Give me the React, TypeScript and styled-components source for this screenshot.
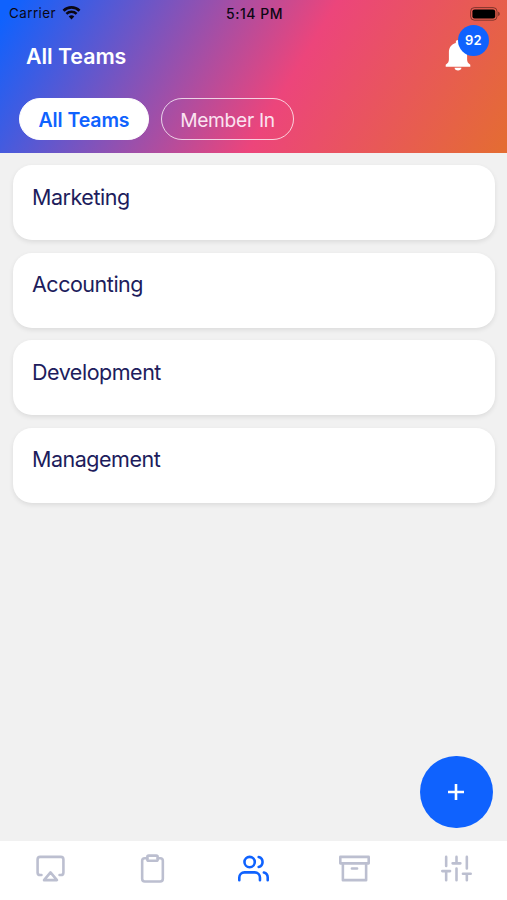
import React from "react";
import styled, { createGlobalStyle } from "styled-components";

const GlobalStyle = createGlobalStyle`
  * { box-sizing: border-box; }
  body { margin: 0; font-family: Inter, "Liberation Sans", sans-serif; }
`;

const Screen = styled.div`
  position: relative;
  display: flex;
  flex-direction: column;
  width: 100%;
  height: 100vh;
  background: #f1f1f1;
  overflow: hidden;
`;

const Header = styled.header`
  flex: none;
  height: 153px;
  background: linear-gradient(121deg, #0f62fe 2%, #ec457b 56.5%, #e46c33 99%);
`;

const StatusBar = styled.div`
  display: grid;
  grid-template-columns: 1fr auto 1fr;
  align-items: center;
  height: 27px;
  padding: 0 7px 0 9px;
  color: #0b0713;
  font-size: 13.4px;
  line-height: 27px;
`;

const Carrier = styled.div`
  display: flex;
  align-items: center;
  gap: 6px;
  letter-spacing: 0.45px;
`;

const WifiIcon = styled.svg`
  margin-bottom: 2px;
`;

const Clock = styled.div`
  font-weight: 500;
  font-size: 14px;
  letter-spacing: 0.5px;
`;

const BatteryIcon = styled.svg`
  justify-self: end;
`;

const TitleRow = styled.div`
  display: flex;
  align-items: center;
  justify-content: space-between;
  height: 58px;
  padding: 0 36px 0 26px;
`;

const Title = styled.h1`
  margin: 0;
  color: #fff;
  font-size: 21.4px;
  line-height: 26px;
  font-weight: 600;
  letter-spacing: -0.05px;
`;

const BellButton = styled.div`
  position: relative;
  width: 26px;
  height: 32px;
`;

const Badge = styled.span`
  position: absolute;
  left: 13px;
  top: -15px;
  width: 31px;
  height: 31px;
  border-radius: 50%;
  background: #0f62fe;
  color: #fff;
  font-size: 13px;
  font-weight: 600;
  line-height: 31px;
  text-align: center;
  letter-spacing: 0.4px;
`;

const Tabs = styled.div`
  display: flex;
  gap: 12px;
  padding: 13px 19px 0;
`;

const Tab = styled.button<{ $active?: boolean }>`
  width: ${(p) => (p.$active ? 130 : 133)}px;
  height: 42px;
  padding: 2px 0 0;
  border: 1px solid ${(p) => (p.$active ? "#fff" : "rgba(255,255,255,0.75)")};
  border-radius: 21px;
  background: ${(p) => (p.$active ? "#fff" : "transparent")};
  color: ${(p) => (p.$active ? "#0f62fe" : "#fbe3f0")};
  font-family: inherit;
  font-size: ${(p) => (p.$active ? 19.5 : 19.2)}px;
  font-weight: ${(p) => (p.$active ? 600 : 400)};
  letter-spacing: ${(p) => (p.$active ? -0.1 : -0.3)}px;
  line-height: 38px;
`;

const TeamList = styled.main`
  flex: 1;
  display: flex;
  flex-direction: column;
  gap: 12.6px;
  padding: 12px 12px 0 13px;
`;

const TeamCard = styled.article`
  height: 75px;
  padding: 17.5px 19px;
  border-radius: 19px;
  background: #fff;
  color: #201c5c;
  font-size: 21.5px;
  line-height: 28px;
  letter-spacing: -0.48px;
  box-shadow: 0 2px 5px rgba(0, 0, 0, 0.09);
`;

const AddButton = styled.button`
  position: absolute;
  right: 14.5px;
  bottom: 72px;
  display: grid;
  place-items: center;
  width: 72.5px;
  height: 72.5px;
  padding: 0;
  border: 0;
  border-radius: 50%;
  background: #0f62fe;
`;

const TabBar = styled.nav`
  flex: none;
  display: grid;
  grid-template-columns: repeat(5, 1fr);
  height: 59px;
  padding-top: 12px;
  background: #fff;
`;

const NavItem = styled.a<{ $active?: boolean }>`
  display: flex;
  justify-content: center;
  color: ${(p) => (p.$active ? "#0f62fe" : "#bcbfd0")};
`;

const NavIcon = styled.svg.attrs({
  viewBox: "0 0 24 24",
  fill: "none",
  stroke: "currentColor",
  strokeWidth: 2,
  strokeLinecap: "round",
  strokeLinejoin: "round",
})`
  width: 31px;
  height: 31px;
`;

const teams = ["Marketing", "Accounting", "Development", "Management"];

const navIcons = [
  {
    name: "Present",
    shape: (
      <>
        <path d="M5 17H4a2 2 0 0 1-2-2V5a2 2 0 0 1 2-2h16a2 2 0 0 1 2 2v10a2 2 0 0 1-2 2h-1" />
        <path d="M12 15l5 6H7z" />
      </>
    ),
  },
  {
    name: "Tasks",
    shape: (
      <>
        <path d="M16 4h2a2 2 0 0 1 2 2v14a2 2 0 0 1-2 2H6a2 2 0 0 1-2-2V6a2 2 0 0 1 2-2h2" />
        <rect x="8" y="2" width="8" height="4" rx="1" />
      </>
    ),
  },
  {
    name: "Teams",
    active: true,
    shape: (
      <>
        <path d="M17 21v-2a4 4 0 0 0-4-4H5a4 4 0 0 0-4 4v2" />
        <circle cx="9" cy="7" r="4" />
        <path d="M23 21v-2a4 4 0 0 0-3-3.87M16 3.13a4 4 0 0 1 0 7.75" />
      </>
    ),
  },
  {
    name: "Archive",
    shape: <path d="M21 8v13H3V8M1 3h22v5H1zM10 12h4" />,
  },
  {
    name: "Settings",
    shape: (
      <path d="M4 21v-7M4 10V3M12 21v-9M12 8V3M20 21v-5M20 12V3M1 14h6M9 8h6M17 16h6" />
    ),
  },
];

export default function App() {
  return (
    <Screen>
      <GlobalStyle />
      <Header>
        <StatusBar>
          <Carrier>
            Carrier
            <WifiIcon width="19" height="14" viewBox="0 0 18 14" fill="none" stroke="#0b0713">
              <path d="M1 4.7a11.4 11.4 0 0 1 16 0" strokeWidth="2.7" />
              <path d="M3.9 7.9a7.2 7.2 0 0 1 10.2 0" strokeWidth="2.5" />
              <path d="M9 13.5 6.2 10.6a4 4 0 0 1 5.6 0z" fill="#0b0713" stroke="none" />
            </WifiIcon>
          </Carrier>
          <Clock>5:14 PM</Clock>
          <BatteryIcon width="30" height="14" viewBox="0 0 30 14">
            <rect x="0.6" y="0.6" width="26.4" height="12.6" rx="3.8" fill="none" stroke="#4d201a" strokeOpacity="0.65" />
            <rect x="2.4" y="2.4" width="22.8" height="9" rx="2.2" fill="#000" />
            <path d="M28.2 4.8c2 .7 2 3.6 0 4.3z" fill="#4d201a" fillOpacity="0.7" />
          </BatteryIcon>
        </StatusBar>
        <TitleRow>
          <Title>All Teams</Title>
          <BellButton>
            <svg width="26" height="32" viewBox="0 0 26 32" fill="#fff">
              <path d="M13 0c-1.3 0-2.2.9-2.2 2.2v.8C6.5 4 3.9 7.6 3.9 12v7.500c0 2.2-.9 3.8-3.2 5.2v2h24.600v-2c-2.300-1.400-3.200-3-3.200-5.200V12c0-4.400-2.600-8-6.900-9v-.8C15.200.9 14.300 0 13 0z" />
              <path d="M9.600 27.800h6.800c0 1.700-1.500 2.800-3.400 2.800S9.600 29.500 9.600 27.800z" />
            </svg>
            <Badge>92</Badge>
          </BellButton>
        </TitleRow>
        <Tabs>
          <Tab $active>All Teams</Tab>
          <Tab>Member In</Tab>
        </Tabs>
      </Header>
      <TeamList>
        {teams.map((team) => (
          <TeamCard key={team}>{team}</TeamCard>
        ))}
      </TeamList>
      <AddButton aria-label="Add team">
        <svg width="18" height="18" viewBox="0 0 18 18" stroke="#fff" strokeWidth="2.6">
          <path d="M9 1v16M1 9h16" />
        </svg>
      </AddButton>
      <TabBar>
        {navIcons.map((item) => (
          <NavItem key={item.name} $active={item.active} aria-label={item.name}>
            <NavIcon>{item.shape}</NavIcon>
          </NavItem>
        ))}
      </TabBar>
    </Screen>
  );
}
